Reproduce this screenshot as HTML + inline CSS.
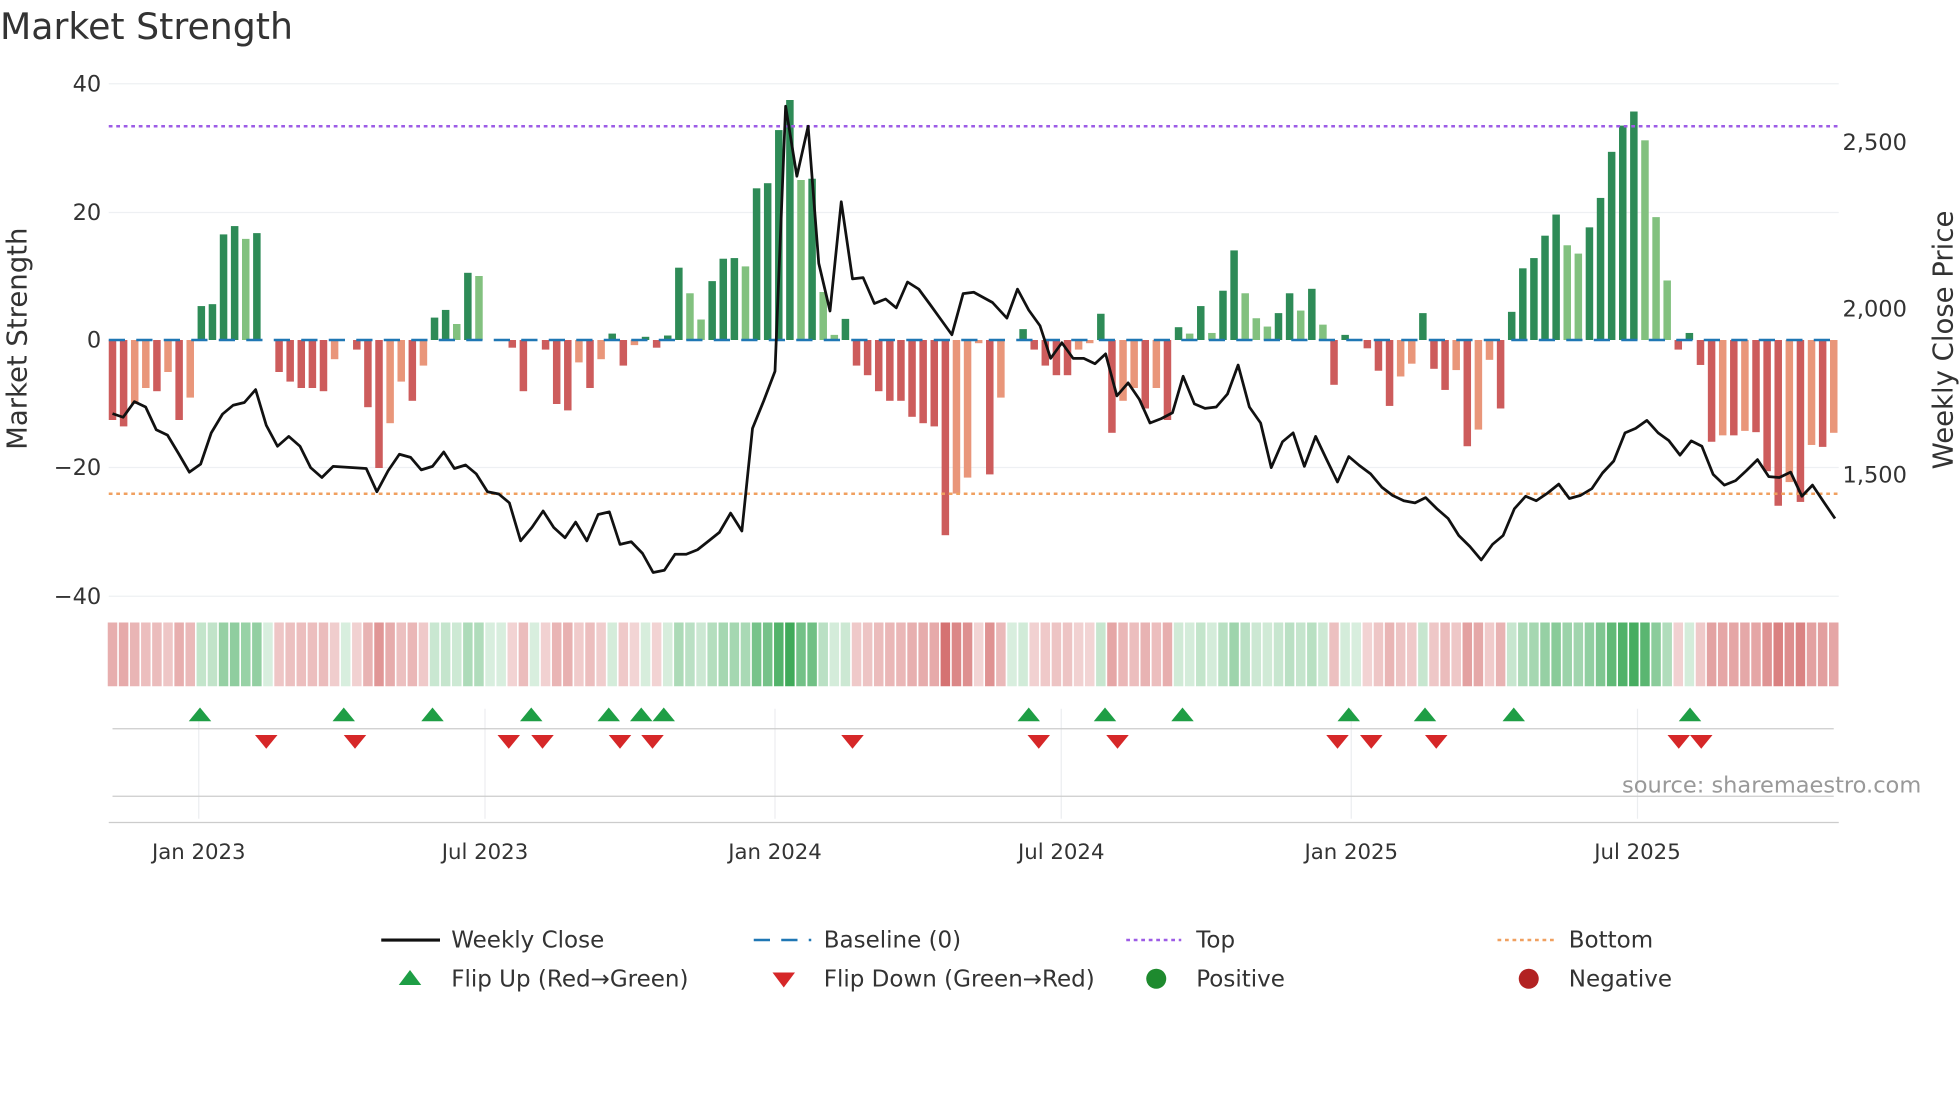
<!DOCTYPE html>
<html><head><meta charset="utf-8"><style>
html,body{margin:0;padding:0;background:#fff;}
svg{display:block;font-family:"DejaVu Sans","Liberation Sans",sans-serif;}
</style></head><body>
<svg id="c" width="1960" height="1102" viewBox="0 0 1568 881.6" xmlns="http://www.w3.org/2000/svg">
<rect width="1568" height="882" fill="#fff"/>
<text x="0" y="31" font-size="29" fill="#333">Market Strength</text>
<g stroke="#eef0f3" stroke-width="1">
<line x1="87" x2="1471" y1="67" y2="67"/><line x1="87" x2="1471" y1="170" y2="170"/>
<line x1="87" x2="1471" y1="374" y2="374"/><line x1="87" x2="1471" y1="477" y2="477"/>
</g>
<g font-size="18" fill="#333" text-anchor="end">
<text x="81" y="73">40</text><text x="81" y="176">20</text><text x="81" y="278">0</text>
<text x="81" y="380">−20</text><text x="81" y="483">−40</text>
</g>
<g font-size="18" fill="#333">
<text x="1474" y="120">2,500</text><text x="1474" y="253">2,000</text><text x="1474" y="386">1,500</text>
</g>
<text transform="translate(21,271) rotate(-90)" font-size="22" fill="#333" text-anchor="middle">Market Strength</text>
<text transform="translate(1562,272) rotate(-90)" font-size="22" fill="#333" text-anchor="middle">Weekly Close Price</text>
<g id="bars"></g>
<line x1="87" x2="1471" y1="272" y2="272" stroke="#1f77b4" stroke-width="2" stroke-dasharray="13,9"/>
<line x1="87" x2="1471" y1="101" y2="101" stroke="#9d5ce6" stroke-width="2" stroke-dasharray="3,3"/>
<line x1="87" x2="1471" y1="395" y2="395" stroke="#f0a060" stroke-width="2" stroke-dasharray="3,3"/>
<polyline id="pl" fill="none" stroke="#111" stroke-width="2.2" stroke-linejoin="round"/>
<g id="heat"></g>
<g stroke="#eceef0" stroke-width="1">
<line x1="159" x2="159" y1="567" y2="655"/><line x1="388" x2="388" y1="567" y2="655"/>
<line x1="620" x2="620" y1="567" y2="655"/><line x1="849" x2="849" y1="567" y2="655"/>
<line x1="1081" x2="1081" y1="567" y2="655"/><line x1="1310" x2="1310" y1="567" y2="655"/>
</g>
<line x1="90" x2="1467" y1="583" y2="583" stroke="#ccc" stroke-width="1"/>
<line x1="90" x2="1467" y1="637" y2="637" stroke="#ccc" stroke-width="1"/>
<line x1="87" x2="1471" y1="658" y2="658" stroke="#ccc" stroke-width="1"/>
<g id="flips"></g>
<text x="1537" y="634" font-size="18" fill="#999" text-anchor="end">source: sharemaestro.com</text>
<g font-size="17" fill="#333" text-anchor="middle">
<text x="159" y="687">Jan 2023</text><text x="388" y="687">Jul 2023</text><text x="620" y="687">Jan 2024</text>
<text x="849" y="687">Jul 2024</text><text x="1081" y="687">Jan 2025</text><text x="1310" y="687">Jul 2025</text>
</g>
<g font-size="18.4" fill="#333">
<line x1="305" x2="352" y1="752" y2="752" stroke="#111" stroke-width="2.5"/><text x="361" y="758">Weekly Close</text>
<line x1="603" x2="649" y1="752" y2="752" stroke="#1f77b4" stroke-width="2" stroke-dasharray="13,9"/><text x="659" y="758">Baseline (0)</text>
<line x1="901" x2="945" y1="752" y2="752" stroke="#9d5ce6" stroke-width="2" stroke-dasharray="3,3"/><text x="957" y="758">Top</text>
<line x1="1198" x2="1243" y1="752" y2="752" stroke="#f0a060" stroke-width="2" stroke-dasharray="3,3"/><text x="1255" y="758">Bottom</text>
<polygon points="319,788 337,788 328,776" fill="#1e9e45"/><text x="361" y="789">Flip Up (Red→Green)</text>
<polygon points="618,778 636,778 627,790" fill="#d62728"/><text x="659" y="789">Flip Down (Green→Red)</text>
<circle cx="925" cy="783" r="8" fill="#1e8a2e"/><text x="957" y="789">Positive</text>
<circle cx="1223" cy="783" r="8" fill="#b22222"/><text x="1255" y="789">Negative</text>
</g>
</svg>
<script>
var v=[-12.5,-13.5,-10,-7.5,-8,-5,-12.5,-9,5.3,5.6,16.5,17.8,15.8,16.7,0,-5,-6.5,-7.5,-7.5,-8,-3,0,-1.5,-10.5,-20,-13,-6.5,-9.5,-4,3.5,4.7,2.5,10.5,10,0,0.1,-1.2,-8,0,-1.5,-10,-11,-3.5,-7.5,-3,1,-4,-0.8,0.5,-1.2,0.7,11.3,7.3,3.2,9.2,12.7,12.8,11.5,23.7,24.5,32.8,37.5,25,25.2,7.5,0.8,3.3,-4,-5.5,-8,-9.5,-9.5,-12,-13,-13.5,-30.5,-24,-21.5,
-0.5,-21,-9,0,1.7,-1.5,-4,-5.5,-5.5,-1.5,-0.5,4.1,-14.5,-9.5,-7.5,-10.7,-7.5,-12.5,2,1,5.3,1.1,7.7,14,7.3,3.4,2.1,4.2,7.3,4.6,8,2.4,-7,0.8,0,-1.3,-4.8,-10.3,-5.7,-3.7,4.2,-4.5,-7.8,-4.7,-16.6,-14,-3.1,-10.7,4.4,11.2,12.8,16.3,19.6,14.8,13.5,17.6,22.2,29.4,33.5,35.7,31.2,19.2,9.3,-1.5,1.1,-3.9,-15.9,-14.9,-14.9,-14.2,-14.4,-20.5,-25.9,-22.2,-25.3,-16.4,-16.7,-14.5];
var ns="http://www.w3.org/2000/svg",B=document.getElementById('bars'),H=document.getElementById('heat');
function el(t,a,p){var e=document.createElementNS(ns,t);for(var k in a)e.setAttribute(k,a[k]);p.appendChild(e);return e;}
var n=v.length,dx=1377/(n-1);
for(var i=0;i<n;i++){var x=90+i*dx,val=v[i],prev=i?v[i-1]:0,c;
 if(val>=0)c=(val>=prev)?'#2e8b57':'#82c17f';else c=(val<=prev)?'#cd5c5c':'#e9967a';
 var h=Math.abs(val)*5.12;
 if(h>0.3)el('rect',{x:x-3,y:val>=0?272-h:272,width:6,height:h,fill:c},B);
 var hc;if(val>=0){hc='rgba(40,160,70,'+(0.18+0.72*val/38).toFixed(2)+')';}else{hc='rgba(200,70,70,'+(0.22+0.55*Math.abs(val)/31).toFixed(2)+')';}
 el('rect',{x:x-3.8,y:498,width:7.6,height:51,fill:hc},H);}
var p1=[[180,927],[197,935],[215,900],[233,912],[250,963],[268,975],[286,1017],[303,1058],[321,1040],[338,970],[356,928],[373,908],[391,902],[409,873],[426,953],[444,1000],[462,978],[480,1000],[497,1048],[515,1070],[533,1045],[586,1050],[603,1102],[621,1055],[639,1018],[657,1025],[674,1053],[692,1045],[710,1013],[727,1050],[745,1042],[762,1062],[780,1102],[798,1107],[815,1127],[833,1212],[851,1182],[869,1145],[886,1182],[904,1205],[921,1170],[939,1212],[957,1153],[975,1147],[992,1220],[1010,1214],[1028,1240],[1045,1283],[1063,1278],[1080,1242],[1098,1242],[1116,1232],[1134,1212],[1151,1193],[1169,1150],[1187,1190],[1204,960],[1222,898],[1240,832],[1257,238],[1275,395],[1293,283],[1310,590],[1328,697],[1346,452],[1364,625],[1381,622],[1399,680],[1417,670],[1434,690],[1452,632],[1470,648],[1488,682],[1505,715],[1523,750],[1541,658],[1558,655]];
var p2=[[0,658],[20,678],[43,713],[60,648],[78,695],[96,730],[113,803],[131,768],[149,803],[166,803],[184,815],[201,793],[219,887],[237,858],[255,895],[272,948],[290,938],[308,925],[325,843],[343,905],[360,915],[378,912],[396,883],[413,818],[431,912],[449,948],[466,1048],[484,990],[501,970],[519,1045],[537,978],[554,1028],[572,1080],[590,1023],[607,1043],[625,1062],[643,1092],[660,1110],[678,1122],[696,1127],[713,1115],[731,1140],[749,1162],[766,1200],[784,1225],[802,1255],[820,1220],[837,1200],[855,1140],[873,1112],[890,1122],[908,1105],[926,1085],[943,1117],[961,1110],[979,1095],[996,1060],[1014,1033],[1032,970],[1049,960],[1067,942],[1085,970],[1102,987],[1120,1020],[1138,988],[1155,1000],[1173,1063],[1191,1087],[1209,1077],[1226,1055],[1244,1030],[1262,1068],[1279,1070],[1297,1058],[1315,1112],[1332,1087],[1350,1125],[1368,1162]];
var pts=[];p1.forEach(function(p){pts.push((p[0]*0.5).toFixed(1)+','+(p[1]*0.357).toFixed(1));});
p2.forEach(function(p){if(p[0]>10)pts.push((784+p[0]*0.5).toFixed(1)+','+(p[1]*0.357).toFixed(1));});
document.getElementById('pl').setAttribute('points',pts.join(' '));
var F=document.getElementById('flips');
[160,275,346,425,487,513,531,823,884,946,1079,1140,1211,1352].forEach(function(x){el('polygon',{points:(x-9)+',577 '+(x+9)+',577 '+x+',566',fill:'#1e9e45'},F);});
[213,284,407,434,496,522,682,831,894,1070,1097,1149,1343,1361].forEach(function(x){el('polygon',{points:(x-9)+',588 '+(x+9)+',588 '+x+',599',fill:'#d62728'},F);});
</script>
</body></html>
